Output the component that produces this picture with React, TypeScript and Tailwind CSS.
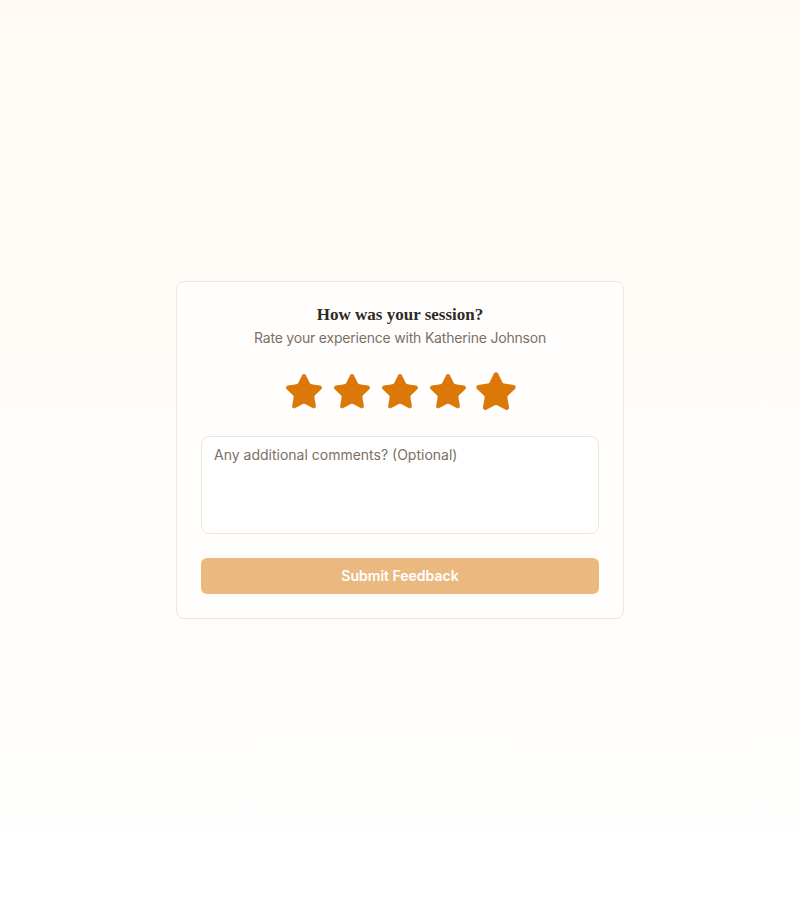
import { Star } from "lucide-react";
import { useState } from "react";

const sans = { fontFamily: "Inter, 'Noto Sans', sans-serif" };

export default function App() {
  const [rating] = useState(5);
  const [comment, setComment] = useState("");

  return (
    <div
      className="flex min-h-screen items-center justify-center bg-linear-to-b from-[#fffbf4] to-white px-4"
      style={sans}
    >
      <div className="w-full max-w-md rounded-lg border border-[#efe7db] bg-[#fffefc] p-6">
        <div className="text-center">
          <h2
            className="text-[17px] leading-[18px] font-bold text-[#2e2a25]"
            style={{ fontFamily: "'Liberation Serif', 'DejaVu Serif', serif" }}
          >
            How was your session?
          </h2>
          <p className="mt-1 text-sm leading-5 tracking-[-0.2px] text-[#7a7066]">
            Rate your experience with Katherine Johnson
          </p>
        </div>

        {/* STARS */}
        <div className="mt-6 flex items-center justify-center gap-2">
          {[1, 2, 3, 4, 5].map((n) => (
            <button
              key={n}
              type="button"
              className={`flex h-10 w-10 items-center justify-center ${n === 5 ? "scale-110" : ""}`}
            >
              <Star
                className="h-10 w-10"
                color="#dc7808"
                fill={n <= rating ? "#dc7808" : "none"}
                strokeWidth={1.5}
              />
            </button>
          ))}
        </div>

        <textarea
          value={comment}
          onChange={(e) => setComment(e.target.value)}
          placeholder="Any additional comments? (Optional)"
          className="mt-6 block h-[98px] w-full resize-none rounded-lg border border-[#eee6da] bg-white px-3 py-2 text-sm leading-5 text-[#2e2a25] outline-none placeholder:text-[#7a7066]"
        />

        <button
          type="button"
          className="mt-6 h-9 w-full rounded-md bg-[#ebb97f] text-sm font-semibold text-white"
        >
          Submit Feedback
        </button>
      </div>
    </div>
  );
}
